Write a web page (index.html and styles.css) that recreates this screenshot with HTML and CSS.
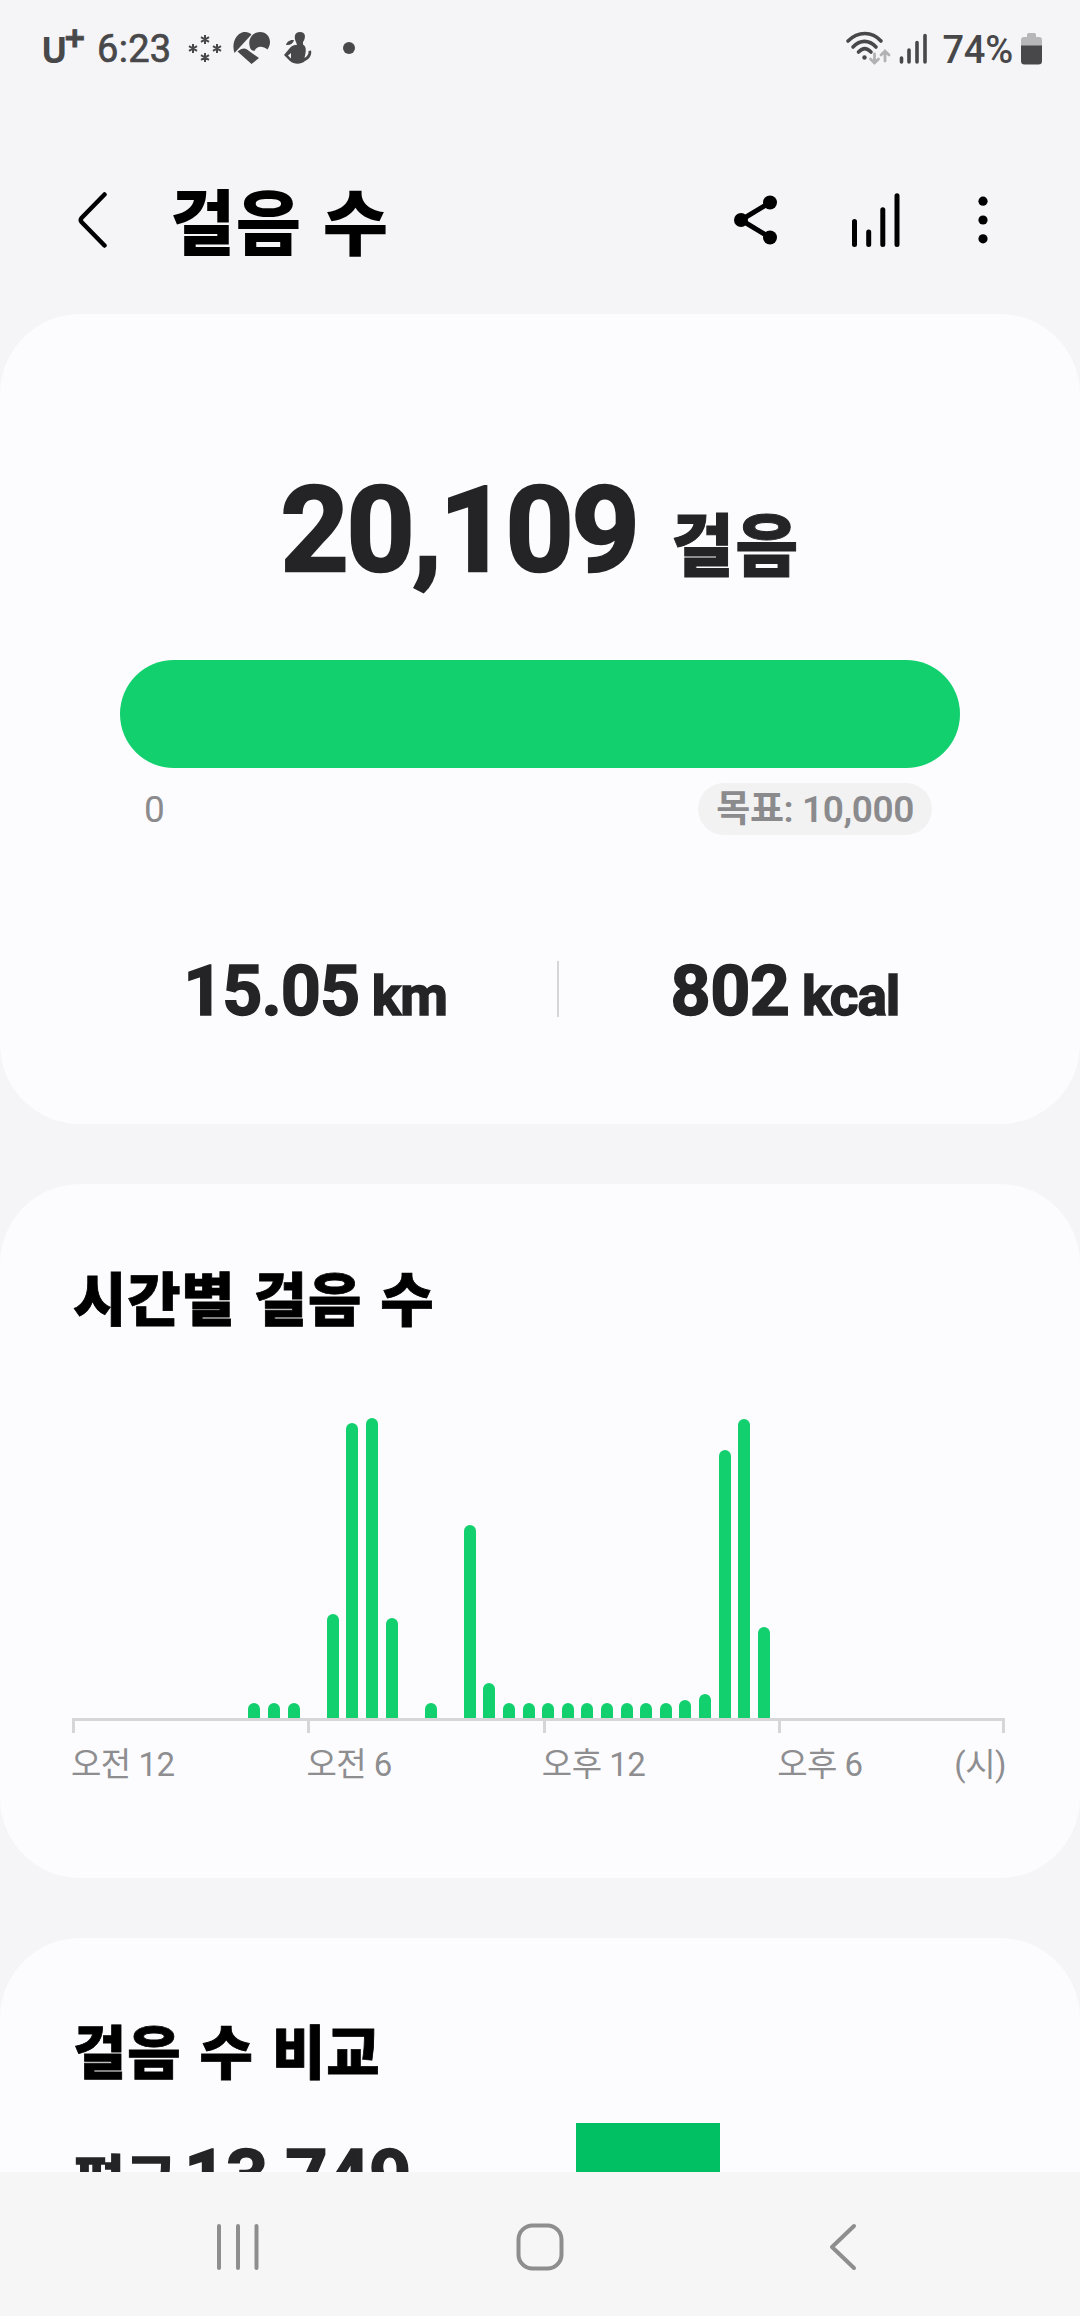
FILE: index.html
```html
<!DOCTYPE html>
<html lang="ko">
<head>
<meta charset="utf-8">
<title>걸음 수</title>
<link rel="stylesheet" href="styles.css">
</head>
<body>
<div class="status">
  <span class="carrier">U<b class="plus">+</b></span>
  <span class="clock">6:23</span>
  <svg class="notices" width="180" height="44" viewBox="0 0 180 44" fill="#48484a">
    <path d="M20 8v9M16 10.200l8 4.600M16 14.800l8-4.600M20 26v9M16 28.200l8 4.600M16 32.800l8-4.600M8 17v9M4 19.200l8 4.600M4 23.800l8-4.600M32 17v9M28 19.200l8 4.600M28 23.800l8-4.600" stroke="#48484a" stroke-width="2"/>
    <path d="M49.500 26C47 19 48.500 9 57 5.500C61 4.300 64.500 5.500 66.500 7.500Z"/>
    <path d="M65 20.500C62 11 69 5 75 5C84 5 88 15 82.500 22.500C77 18 71 19.500 69.500 24C66.500 23.500 65.500 22.300 65 20.500Z"/>
    <path d="M52.500 24.500C57 20.500 61 20.500 64 24L74 31L66.500 37Z"/>
    <path d="M115 5C109 5 109 11 111 15L112 18C107 18 106 20 104 22L99 28L105 34C109 37.500 116 37.500 120 34C125 32 127 27 126 23.500L123.500 24C124 27 122 29.500 119.500 31C121 25 122 20 118 17.500V15C121 11 121 5 115 5ZM106 26V31.500L103 28.500ZM109 13C104 12.500 102 15 101 18C105 18.500 108 17 109 13Z"/>
    <circle cx="164" cy="21" r="6"/>
  </svg>
  <svg class="signals" width="84" height="44" viewBox="0 0 84 44" fill="none" stroke="#48484a" stroke-width="3.600" stroke-linecap="round">
    <path d="M3 14C13 4 27 4 36 14M8 20C15 12.500 24 12.500 31 20M13.500 25C18 20.500 21.500 20.500 26 25"/>
    <circle cx="19.500" cy="30.500" r="2.200" fill="#48484a" stroke="none"/>
    <path d="M29.500 27v9m-4-4l4 4l4-4M40 34V24m-4 4l4-4l4 4" stroke="#b2b2b5" stroke-width="2.800"/>
    <path d="M56.500 31v4M64 23v12M72 15.500v19.500M80 8.500v26.500" stroke-width="3.600"/>
  </svg>
  <span class="percent">74%</span>
  <svg class="battery" width="21" height="32" viewBox="0 0 21 32">
    <path d="M6 4V1.500Q6 0 7.500 0H13.500Q15 0 15 1.500V4H18Q21 4 21 7V13H0V7Q0 4 3 4Z" fill="#b7b7ba"/>
    <path d="M0 12.500H21V28Q21 31.500 17.500 31.500H3.500Q0 31.500 0 28Z" fill="#48484a"/>
  </svg>
</div>
<header class="bar">
  <svg class="back" width="30" height="56" viewBox="0 0 30 56" fill="none" stroke="#000" stroke-width="4.500" stroke-linecap="round" stroke-linejoin="round"><path d="M26.500 2.500L3.500 26Q2 28 3.500 30L26.500 53.500"/></svg>
  <h1 class="title">걸음 수</h1>
  <svg class="share" width="44" height="50" viewBox="0 0 44 50"><path d="M36 7.500L7 25L36 42.500" fill="none" stroke="#000" stroke-width="5"/><circle cx="7" cy="25" r="7"/><circle cx="36" cy="7.500" r="7"/><circle cx="36" cy="42.500" r="7"/></svg>
  <svg class="trend" width="48" height="54" viewBox="0 0 48 54" fill="none" stroke="#000" stroke-width="5" stroke-linecap="round"><path d="M2.500 28.500v23M16.700 39v12.500M30.800 16.700v34.800M45 2.700v48.800"/></svg>
  <svg class="more" width="10" height="48" viewBox="0 0 10 48"><circle cx="5" cy="5.200" r="4.600"/><circle cx="5" cy="24" r="4.600"/><circle cx="5" cy="42.800" r="4.600"/></svg>
</header>
<main class="scroller">
  <section class="card summary">
    <div class="hero"><span class="steps">20,109</span><span class="unit">걸음</span></div>
    <div class="progress"></div>
    <div class="scale"><span>0</span><span class="goal">목표: 10,000</span></div>
    <div class="metrics">
      <div class="metric distance">15.05<small class="small"> km</small></div>
      <div class="divider"></div>
      <div class="metric">802<small class="small"> kcal</small></div>
    </div>
  </section>
  <section class="card hourly">
    <h2 class="heading">시간별 걸음 수</h2>
    <div class="bars">
      <i></i><i></i><i></i><i></i><i></i><i></i><i></i><i></i><i></i>
      <i style="height:15px"></i><i style="height:15px"></i><i style="height:15px"></i><i></i>
      <i style="height:104px"></i><i style="height:295px"></i><i style="height:300px"></i><i style="height:100px"></i><i></i>
      <i style="height:15px"></i><i></i><i style="height:193px"></i><i style="height:35px"></i>
      <i style="height:15px"></i><i style="height:15px"></i><i style="height:15px"></i><i style="height:15px"></i><i style="height:15px"></i><i style="height:15px"></i><i style="height:15px"></i><i style="height:15px"></i><i style="height:15px"></i>
      <i style="height:18px"></i><i style="height:24px"></i><i style="height:268px"></i><i style="height:299px"></i><i style="height:91px"></i>
    </div>
    <div class="axis"><i></i><i></i><i></i><i></i></div>
    <div class="labels"><span>오전 12</span><span>오전 6</span><span>오후 12</span><span>오후 6</span><span class="hour">(시)</span></div>
  </section>
  <section class="card compare">
    <div>
      <h2 class="heading">걸음 수 비교</h2>
      <p class="average"><span class="avg-label">평균</span>13,749</p>
    </div>
    <div class="block"></div>
  </section>
</main>
<nav class="nav">
  <svg class="recents" width="44" height="48" viewBox="0 0 44 48" stroke="#8e8e8e" stroke-width="4" stroke-linecap="round"><path d="M3 3v42M22 3v42M40.500 3v42"/></svg>
  <svg class="home" width="48" height="48" viewBox="0 0 48 48" fill="none" stroke="#8e8e8e" stroke-width="4"><rect x="2.500" y="2.500" width="43" height="43" rx="14"/></svg>
  <svg class="nav-back" width="30" height="48" viewBox="0 0 30 48" fill="none" stroke="#8e8e8e" stroke-width="4" stroke-linecap="round" stroke-linejoin="round"><path d="M26 3L4 24L26 45"/></svg>
</nav>
</body>
</html>
```
FILE: styles.css
```css
* { box-sizing: border-box; }
body {
  margin: 0;
  height: 2316px;
  overflow: hidden;
  display: flex;
  flex-direction: column;
  background: #f5f5f8;
  color: #242427;
  font-family: Roboto, "Noto Sans CJK KR", sans-serif;
}
svg { display: block; flex: none; }
h1, h2, p { margin: 0; }

.status {
  height: 97px;
  flex: none;
  display: flex;
  align-items: center;
  padding: 0 38px 0 41px;
  color: #48484a;
  font-size: 38px;
  line-height: 40px;
  font-weight: 500;
}
.carrier { width: 56px; font-family: "Open Sans", sans-serif; font-weight: 700; font-size: 35px; line-height: 40px; padding-top: 2px; white-space: nowrap; }
.plus { font-size: 36px; line-height: 0; vertical-align: 12px; font-weight: 700; margin-left: -3px; -webkit-text-stroke: .8px #48484a; }
.clock { width: 86px; font-weight: 400; letter-spacing: .3px; -webkit-text-stroke: .7px #48484a; }
.notices { margin: 0 auto 0 2px; }
.percent { margin: 2px 8px 0 13px; letter-spacing: -.2px; }

.bar {
  height: 217px;
  flex: none;
  display: flex;
  align-items: center;
  padding: 0 92px 0 78px;
}
.back, .share, .trend, .more { margin-top: 28px; }
.title {
  margin: 38px auto 0 62px;
  color: #000;
  font-size: 71px;
  line-height: 80px;
  font-weight: 900;
  letter-spacing: .5px;
  word-spacing: 3px;
}
.share { margin-right: 74px; }
.trend { margin-right: 78px; }

.scroller {
  flex: 1;
  min-height: 0;
  overflow: hidden;
  display: flex;
  flex-direction: column;
  gap: 60px;
}
.card { flex: none; background: #fcfcfe; border-radius: 80px; }

.summary { height: 810px; padding: 157px 120px 0; }
.hero { display: flex; justify-content: center; align-items: baseline; height: 120px; line-height: 120px; font-weight: 700; }
.steps { font-size: 119px; letter-spacing: -2.300px; -webkit-text-stroke: 2.500px #242427; }
.unit { font-size: 68px; margin-left: 34px; font-weight: 900; letter-spacing: 1.500px; -webkit-text-stroke: 1px #242427; }
.progress { height: 108px; margin-top: 69px; border-radius: 54px; background: #13d06e; }
.scale {
  display: flex;
  justify-content: space-between;
  margin: 15px 28px 0 24px;
  color: #8b8b8e;
  font-size: 37px;
  line-height: 53px;
  height: 52px;
}
.goal { padding: 0 18px; border-radius: 26px; background: #f2f2f3; font-weight: 600; letter-spacing: -.4px; white-space: nowrap; }
.metrics { display: grid; grid-template-columns: 478px 2px 452px; align-items: start; margin: 120px -50px 0 -41px; }
.metric { text-align: center; font-size: 70px; line-height: 72px; font-weight: 700; letter-spacing: -.6px; -webkit-text-stroke: 1.500px #242427; white-space: nowrap; }
.distance { letter-spacing: -1px; padding-right: 6px; }
.small { font-size: 55px; letter-spacing: -1px; }
.divider { height: 56px; margin-top: 6px; background: #d6d6d9; }

.hourly { height: 694px; padding: 82px 66px 0 72px; }
.heading { padding-left: 1px; color: #000; font-size: 58px; line-height: 70px; font-weight: 900; letter-spacing: .8px; -webkit-text-stroke: .8px #000; word-spacing: 3px; white-space: nowrap; }
.bars { height: 300px; margin-top: 82px; display: grid; grid-template-columns: repeat(48, 19.6px); align-items: end; }
.bars i { width: 12px; border-radius: 6px 6px 0 0; background: #13d06e; }
.axis { width: 933px; height: 15px; border-top: 3px solid #d6d6d8; border-right: 3px solid #d6d6d8; display: grid; grid-template-columns: repeat(3, 235.4px) 1fr; }
.axis i { border-left: 3px solid #d6d6d8; }
.labels { width: 935px; display: grid; grid-template-columns: repeat(3, 235.4px) auto auto; margin: 12px 0 0 -1px; color: #8e8e91; font-size: 33px; letter-spacing: -.5px; line-height: 40px; }
.hour { justify-self: end; }

.compare { display: grid; grid-template-columns: 504px 144px; padding: 81px 72px 0; height: 500px; }
.average { margin-top: 43px; padding-left: 1px; font-size: 74px; line-height: 90px; font-weight: 700; -webkit-text-stroke: 1.500px #242427; white-space: nowrap; letter-spacing: -.6px; }
.avg-label { display: inline-block; width: 111px; font-size: 57px; }
.block { margin-top: 104px; background: #00c063; }

.nav { height: 144px; flex: none; display: flex; align-items: center; padding: 6px 0 0 216px; background: #f6f6f6; }
.home { margin-left: 256px; }
.nav-back { margin-left: 264px; }
```
